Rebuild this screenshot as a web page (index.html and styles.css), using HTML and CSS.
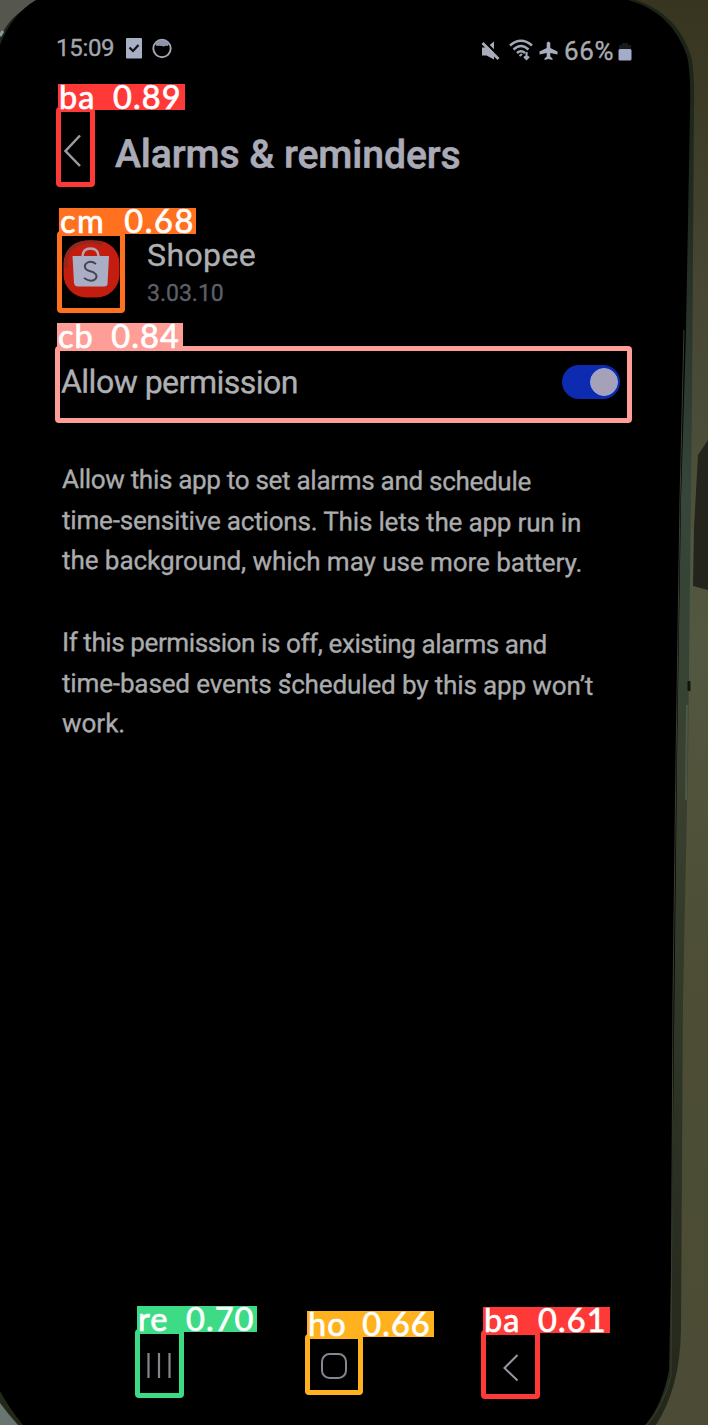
FILE: index.html
```html
<!DOCTYPE html>
<html lang="en">
<head>
<meta charset="utf-8">
<title>Alarms &amp; reminders</title>
<link rel="stylesheet" href="styles.css">
</head>
<body>
<div class="stage">
  <svg class="backdrop" viewBox="0 0 708 1425" aria-hidden="true">
    <defs>
      <linearGradient id="desk" x1="0" y1="0" x2="0" y2="1">
        <stop offset="0" stop-color="#37351f"/><stop offset=".2" stop-color="#464632"/><stop offset=".45" stop-color="#545740"/><stop offset=".7" stop-color="#4c4d34"/><stop offset="1" stop-color="#4c4c36"/>
      </linearGradient>
      <linearGradient id="rim" x1="0" y1="0" x2="0" y2="1">
        <stop offset="0" stop-color="#1c2216"/><stop offset=".15" stop-color="#222b20"/><stop offset=".35" stop-color="#35463a"/><stop offset=".55" stop-color="#39402f"/><stop offset="1" stop-color="#22271a"/>
      </linearGradient>
    </defs>
    <rect width="708" height="1425" fill="url(#desk)"/>
    <path d="M0 0H60V60H0Z" fill="#55564d"/>
    <path d="M0 1370H40V1425H0Z" fill="#697570"/>
    <path d="M708 440L698 455L694 528L693 586L708 590Z" fill="#24231c"/>
    <path d="M0 38Q12 10 44 0H636Q678 14 691 56Q695 72 694 110L692 400L688 760L683 1000L681 1330Q680 1388 656 1425H18Q8 1414 0 1403Z" fill="url(#rim)"/>
    <path d="M692 530L692 690M687 705L686 800" stroke="#4b5945" stroke-width="2"/>
    <path d="M689 681V691" stroke="#10160d" stroke-width="3"/>
    <path d="M0 45Q12 14 36 0H628Q672 12 687 56Q691 72 690 110L686 330L681 500L677 760L672 1220L669 1370Q662 1406 645 1425H23Q9 1408 0 1391Z" fill="#000"/>
    <path d="M684 330L680 500L676 760L673 1000L671 1375Q664 1405 647 1425" fill="none" stroke="#39402f" stroke-width="1"/>
    <path d="M0 36L3 31" fill="none" stroke="#8c9993" stroke-width="3"/>
  </svg>

  <main class="screen">
    <header class="status">
      <div class="status-left">
        <span class="clock">15:09</span>
        <svg class="task-icon" width="16" height="21" viewBox="0 0 16 21"><rect width="16" height="20.5" rx="1" fill="#a9afc4"/><path d="M3.500 9.500L7 13L12.500 7" fill="none" stroke="#10131c" stroke-width="2.200"/></svg>
        <svg class="ring-icon" width="20" height="21" viewBox="0 0 20 21"><circle cx="10" cy="10.500" r="8.700" fill="none" stroke="#a3a7b5" stroke-width="1.900"/><path d="M3 5Q10-1 17 5L16 8Q13 7.500 12 8.500Q8 7.500 4.500 8Z" fill="#8e95a8"/></svg>
      </div>
      <div class="status-right">
        <svg class="mute-icon" width="19" height="20" viewBox="0 0 19 20"><path d="M1 6.500H5.500L13 .5V18.500L5.500 14.500H1Z" fill="#a9acba"/><path d="M3 0L19 16" stroke="#000" stroke-width="2.500"/><path d="M1.500 2L17.500 18" stroke="#a9acba" stroke-width="2.800"/></svg>
        <svg class="wifi-icon" width="24" height="22" viewBox="0 0 24 22"><path d="M1 6.500Q12-3 23 6.500M4.500 10.500Q12 3.500 19.500 10.500M8 14Q12 10.500 16 14" fill="none" stroke="#a3a8b8" stroke-width="2.500"/><path d="M10.500 17L13 15M17.500 13V20M15 17.500L17.500 20L20 17.500" fill="none" stroke="#a3a8b8" stroke-width="2.200"/></svg>
        <svg class="plane-icon" width="19" height="20" viewBox="0 0 19 20"><path d="M7.700 2Q9.500-1 11.300 2V7L18.500 10.500V13.500L11.300 12V15.500L13.500 17.500V19L9.500 18L5.500 19V17.500L7.700 15.500V12L.5 13.500V10.500L7.700 7Z" fill="#a9acba"/></svg>
        <span class="charge">66%</span>
        <svg class="battery-icon" width="14" height="19" viewBox="0 0 14 19"><path d="M4 1H10V3H13V7H1V3H4Z" fill="#181a20"/><rect x=".5" y="7" width="13" height="11.500" rx="1.500" fill="#a3acc8"/></svg>
      </div>
    </header>

    <div class="title-row">
      <svg class="back-icon" width="18" height="34" viewBox="0 0 18 34"><path d="M16 1.500L1.500 17L16 32" fill="none" stroke="#9b9ca3" stroke-width="2.500"/></svg>
      <h1 class="title">Alarms &amp; reminders</h1>
    </div>

    <section class="app">
      <svg class="app-icon" width="57" height="58" viewBox="0 0 57 58">
        <rect x=".5" y=".5" width="56" height="57" rx="23" fill="#c31d10"/>
        <path d="M3 28Q1 7 19 3Q29 0 39 4" fill="none" stroke="#8f281e" stroke-width="3"/>
        <path d="M19.500 17Q19.500 8.500 27.500 8.500Q35.500 8.500 35.500 17" fill="none" stroke="#b6a6b4" stroke-width="2.400"/>
        <path d="M9.500 16H46L44.500 44Q44 46.500 41 46.500H15Q11.500 46.500 11 43Z" fill="#aaaec5"/>
        <path d="M33 24Q28.500 20.500 24.500 22.500C20 25 21.500 30 26.500 31C31.500 32 35.500 35 32.500 39Q28.500 43 21 38" fill="none" stroke="#454550" stroke-width="1.900"/>
      </svg>
      <div class="app-text">
        <div class="app-name">Shopee</div>
        <div class="app-version">3.03.10</div>
      </div>
    </section>

    <section class="permission">
      <span class="permission-label">Allow permission</span>
      <span class="toggle"><span class="knob"></span></span>
    </section>

    <section class="copy">
      <p><span class="line l1">Allow this app to set alarms and schedule</span><span class="line l2">time-sensitive actions. This lets the app run in</span><span class="line l3">the background, which may use more battery.</span></p>
      <p><span class="line l4">If this permission is off, existing alarms and</span><span class="line l5">time-based events scheduled by this app won’t</span><span class="line l6">work.</span></p>
    </section>

    <nav class="nav">
      <svg width="26" height="28" viewBox="0 0 26 28"><path d="M2.500 1V26M13 1V26M23.500 1V26" stroke="#85868a" stroke-width="2.200"/></svg>
      <svg class="nav-home" width="28" height="28" viewBox="0 0 28 28"><rect x="2" y="2" width="24" height="24" rx="7.500" fill="none" stroke="#85868f" stroke-width="2"/></svg>
      <svg class="nav-prev" width="18" height="28" viewBox="0 0 18 28"><path d="M14.500 1L1.500 14L14.500 26.500" fill="none" stroke="#96979f" stroke-width="2"/></svg>
    </nav>
  </main>

  <div class="speck"></div>
  <div class="box title-back"><span class="tag">ba 0.89</span></div>
  <div class="box app-mark"><span class="tag">cm 0.68</span></div>
  <div class="box checkbox"><span class="tag">cb 0.84</span></div>
  <div class="box recents"><span class="tag">re 0.70</span></div>
  <div class="box home"><span class="tag">ho 0.66</span></div>
  <div class="box nav-back"><span class="tag">ba 0.61</span></div>
</div>
</body>
</html>
```
FILE: styles.css
```css
* { box-sizing: border-box; }
body { margin: 0; background: #000; }
svg { display: block; flex: none; }
.stage { position: relative; width: 708px; height: 1425px; overflow: hidden; font-family: Roboto, "Liberation Sans", sans-serif; color: #afb0b3; }
.backdrop { position: absolute; inset: 0; width: 708px; height: 1425px; }
.screen { position: relative; width: 708px; height: 1425px; padding: 34px 76px 0 56px; display: flex; flex-direction: column; -webkit-text-stroke: 0.35px; }
.screen span, .title, .app-text { white-space: nowrap; }

.status { height: 36px; display: flex; justify-content: space-between; align-items: flex-start; }
.status-left, .status-right { display: flex; align-items: flex-start; }
.clock { width: 70px; font-size: 24px; line-height: 28px; letter-spacing: -0.3px; color: #a4a6ad; }
.task-icon { margin-top: 4px; }
.ring-icon { margin: 4px 0 0 10px; }
.status-right { padding-top: 3px; }
.mute-icon { margin: 4px 9px 0 0; }
.wifi-icon { margin: 2px 6px 0 0; }
.plane-icon { margin: 4px 6px 0 0; }
.charge { width: 54px; font-size: 26px; line-height: 28px; letter-spacing: 0.7px; color: #a9abb2; }
.battery-icon { margin-top: 5px; }

.title-row { height: 64px; margin-top: 52px; padding-left: 8px; display: flex; align-items: flex-start; }
.back-icon { margin-top: 12px; }
.title { margin: 9px 0 0 33px; font-size: 39px; line-height: 46px; font-weight: 500; color: #aaabb7; -webkit-text-stroke: 0.6px; transform: rotate(0.2deg); transform-origin: 0 50%; }

.app { height: 80px; margin-top: 50px; padding-left: 7px; display: flex; align-items: flex-start; }
.app-icon { margin-top: 4px; }
.app-text { margin-left: 27px; }
.app-name { font-size: 32px; line-height: 38px; letter-spacing: 0.4px; }
.app-version { margin-top: 6px; font-size: 23px; line-height: 28px; color: #5d5f68; }

.permission { height: 72px; margin-top: 30px; padding: 0 12px 0 5px; display: flex; align-items: center; justify-content: space-between; }
.permission-label { font-size: 32px; line-height: 38px; letter-spacing: -0.5px; transform: rotate(0.2deg); }
.toggle { width: 58px; height: 34px; border-radius: 17px; background: #0c2bb0; padding: 3px 2px; display: flex; justify-content: flex-end; }
.knob { width: 28px; height: 28px; border-radius: 50%; background: #a5a1b9; border: 1px solid #95a5dc; }

.copy { margin-top: 41px; padding-left: 6px; font-size: 26px; line-height: 40.7px; color: #abacae; }
.copy p { margin: 0 0 40.7px; }
.line { display: block; width: max-content; transform: rotate(0.3deg); transform-origin: 0 50%; }
.l1 { letter-spacing: -0.29px; }
.l2 { letter-spacing: -0.17px; }
.l3 { letter-spacing: -0.04px; }
.l4 { letter-spacing: -0.4px; }
.l5 { letter-spacing: -0.13px; }

.nav { margin: auto 111px 43px 90px; display: flex; justify-content: space-between; align-items: center; }
.nav-home { margin-right: 8px; }
.nav-prev { margin-top: 4px; }

.speck { position: absolute; left: 286px; top: 673px; width: 5px; height: 5px; border-radius: 50%; background: #a9b1c0; }

.box { position: absolute; border: 5px solid; border-radius: 4px; }
.tag { position: absolute; left: -3px; bottom: calc(100% + 2px); height: 26px; padding-left: 1px; font-family: Lato, sans-serif; font-size: 32.5px; line-height: 25px; font-weight: 400; -webkit-text-stroke: 0.7px; letter-spacing: 1.1px; word-spacing: 8px; white-space: nowrap; color: #fff; }
.title-back, .nav-back { border-color: #ff3838; }
.title-back .tag, .nav-back .tag { width: 127px; background: #ff3838; }
.title-back { left: 56px; top: 107px; width: 39px; height: 80px; }
.app-mark { left: 57px; top: 231px; width: 68px; height: 82px; border-color: #ff701f; }
.app-mark .tag { width: 137px; background: #ff701f; letter-spacing: 1.6px; word-spacing: 9px; }
.checkbox { left: 55px; top: 346px; width: 577px; height: 77px; border-color: #ff9d97; }
.checkbox .tag { width: 126px; background: #ff9d97; }
.recents { left: 135px; top: 1329px; width: 49px; height: 69px; border-color: #3ddb86; }
.recents .tag { width: 120px; background: #3ddb86; }
.home { left: 305px; top: 1334px; width: 58px; height: 61px; border-color: #ffb21d; }
.home .tag { width: 127px; background: #ffb21d; word-spacing: 6px; }
.nav-back { left: 481px; top: 1330px; width: 59px; height: 69px; }
```
